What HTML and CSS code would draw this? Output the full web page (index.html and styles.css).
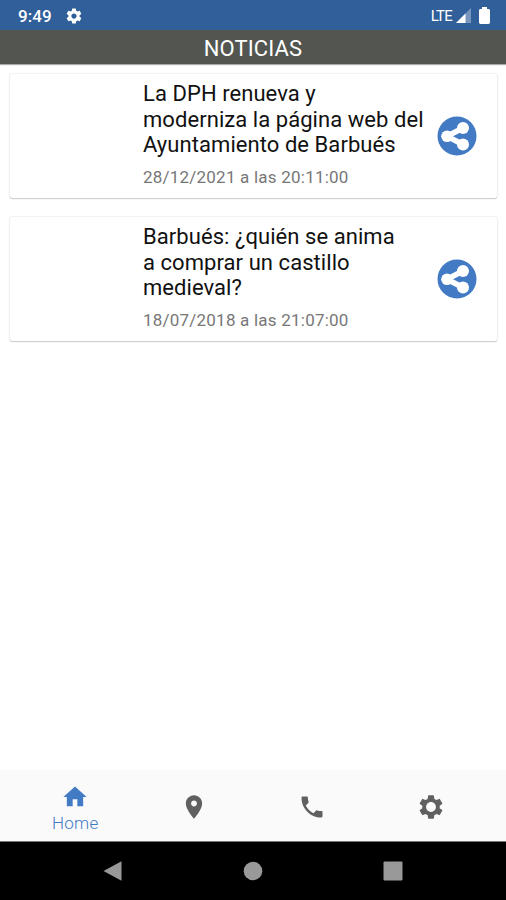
FILE: index.html
```html
<!DOCTYPE html>
<html lang="es">
<head>
<meta charset="UTF-8">
<meta name="viewport" content="width=device-width, initial-scale=1.0">
<title>Noticias</title>
<link rel="stylesheet" href="styles.css">
</head>
<body>

<div class="estado">
  <span class="hora">9:49</span>
  <svg class="ajustes" viewBox="0 0 24 24"><path d="M19.43 12.98c.04-.32.07-.64.07-.98s-.03-.66-.07-.98l2.11-1.65c.19-.15.24-.42.12-.64l-2-3.46c-.12-.22-.39-.3-.61-.22l-2.49 1c-.52-.4-1.08-.73-1.69-.98l-.38-2.65C14.46 2.18 14.25 2 14 2h-4c-.25 0-.46.18-.49.42l-.38 2.65c-.61.25-1.17.59-1.69.98l-2.49-1c-.23-.09-.49 0-.61.22l-2 3.46c-.13.22-.07.49.12.64l2.11 1.65c-.04.32-.07.65-.07.98s.03.66.07.98l-2.11 1.65c-.19.15-.24.42-.12.64l2 3.46c.12.22.39.3.61.22l2.49-1c.52.4 1.08.73 1.69.98l.38 2.65c.03.24.24.42.49.42h4c.25 0 .46-.18.49-.42l.38-2.65c.61-.25 1.17-.59 1.69-.98l2.49 1c.23.09.49 0 .61-.22l2-3.46c.12-.22.07-.49-.12-.64l-2.11-1.65zM12 15.5c-1.93 0-3.5-1.57-3.5-3.5s1.57-3.5 3.5-3.5 3.5 1.57 3.5 3.5-1.57 3.5-3.5 3.5z"/></svg>
  <span class="lte">LTE</span>
  <svg class="senal" viewBox="0 0 15 15"><path opacity=".35" d="M15 0v15H0z"/><path d="M9.5 5.5V15H0z"/></svg>
  <svg class="bateria" viewBox="0 0 11 17"><path d="M3 0h5v2h1.5c.8 0 1.5.6 1.5 1.4v12.2c0 .8-.7 1.4-1.5 1.4h-8C.7 17 0 16.400 0 15.600V3.400C0 2.600.7 2 1.500 2H3z"/></svg>
</div>

<header class="titulo">NOTICIAS</header>

<main class="noticias">
  <article class="noticia">
    <div class="texto">
      <h2>La DPH renueva y<br>moderniza la página web del<br>Ayuntamiento de Barbués</h2>
      <p>28/12/2021 a las 20:11:00</p>
    </div>
    <svg class="compartir" viewBox="0 0 40 40"><circle cx="20" cy="20" r="19.500" fill="#427ac4"/><path d="M26 12 10 20.300l16 8.200" fill="none" stroke="#fff" stroke-width="5.500"/><circle cx="26" cy="12" r="6" fill="#fff"/><circle cx="10" cy="20.300" r="5.800" fill="#fff"/><circle cx="26" cy="28.500" r="6" fill="#fff"/></svg>
  </article>
  <article class="noticia">
    <div class="texto">
      <h2>Barbués: ¿quién se anima<br>a comprar un castillo<br>medieval?</h2>
      <p>18/07/2018 a las 21:07:00</p>
    </div>
    <svg class="compartir" viewBox="0 0 40 40"><circle cx="20" cy="20" r="19.500" fill="#427ac4"/><path d="M26 12 10 20.300l16 8.200" fill="none" stroke="#fff" stroke-width="5.500"/><circle cx="26" cy="12" r="6" fill="#fff"/><circle cx="10" cy="20.300" r="5.800" fill="#fff"/><circle cx="26" cy="28.500" r="6" fill="#fff"/></svg>
  </article>
</main>

<nav class="menu">
  <a class="opcion activa">
    <svg viewBox="0 0 24 24"><path d="M10 20v-6h4v6h5v-8h3L12 3 2 12h3v8z"/></svg>
    <span>Home</span>
  </a>
  <a class="opcion">
    <svg viewBox="0 0 24 24"><path d="M12 2C8.130 2 5 5.130 5 9c0 5.250 7 13 7 13s7-7.750 7-13c0-3.870-3.130-7-7-7zm0 9.500c-1.380 0-2.500-1.120-2.500-2.500s1.120-2.500 2.500-2.500 2.500 1.120 2.500 2.500-1.120 2.500-2.500 2.500z"/></svg>
  </a>
  <a class="opcion">
    <svg viewBox="0 0 24 24"><path d="M20 15.500c-1.250 0-2.450-.2-3.570-.57-.1-.03-.21-.05-.31-.05-.26 0-.51.1-.71.290l-2.200 2.200c-2.830-1.440-5.150-3.750-6.590-6.580l2.200-2.210c.28-.27.36-.66.25-1.010C8.700 6.450 8.500 5.250 8.500 4c0-.55-.45-1-1-1H4c-.55 0-1 .45-1 1 0 9.390 7.610 17 17 17 .55 0 1-.45 1-1v-3.500c0-.55-.45-1-1-1z"/></svg>
  </a>
  <a class="opcion">
    <svg viewBox="0 0 24 24"><path d="M19.43 12.98c.04-.32.07-.64.07-.98s-.03-.66-.07-.98l2.11-1.65c.19-.15.24-.42.12-.64l-2-3.46c-.12-.22-.39-.3-.61-.22l-2.49 1c-.52-.4-1.08-.73-1.69-.98l-.38-2.65C14.46 2.18 14.25 2 14 2h-4c-.25 0-.46.18-.49.42l-.38 2.65c-.61.25-1.17.59-1.69.98l-2.49-1c-.23-.09-.49 0-.61.22l-2 3.46c-.13.22-.07.49.12.64l2.11 1.65c-.04.32-.07.65-.07.98s.03.66.07.98l-2.11 1.65c-.19.15-.24.42-.12.64l2 3.46c.12.22.39.3.61.22l2.49-1c.52.4 1.08.73 1.69.98l.38 2.65c.03.24.24.42.49.42h4c.25 0 .46-.18.49-.42l.38-2.65c.61-.25 1.17-.59 1.69-.98l2.49 1c.23.09.49 0 .61-.22l2-3.46c.12-.22.07-.49-.12-.64l-2.11-1.65zM12 16.200c-2.320 0-4.200-1.880-4.200-4.200s1.880-4.200 4.200-4.200 4.200 1.880 4.200 4.200-1.880 4.200-4.200 4.200z"/></svg>
  </a>
</nav>

<div class="sistema">
  <svg viewBox="0 0 22 22"><path d="M19.500 1.200v19.600L1.500 11z"/></svg>
  <svg viewBox="0 0 22 22"><circle cx="11" cy="11" r="9.300"/></svg>
  <svg viewBox="0 0 22 22"><rect x="1.500" y="1.500" width="19" height="19" rx="1"/></svg>
</div>

</body>
</html>
```
FILE: styles.css
```css
body {
  margin: 0;
  height: 100vh;
  display: flex;
  flex-direction: column;
  overflow: hidden;
  background: #fff;
  font-family: Roboto, "Liberation Sans", sans-serif;
}
.estado {
  box-sizing: border-box;
  height: 30px;
  padding: 1px 16px 0 18px;
  display: flex;
  align-items: center;
  background: #305f9a;
  color: #fff;
  fill: #fff;
}
.hora {
  font-size: 17px;
  font-weight: 500;
  letter-spacing: 0.1px;
}
.ajustes {
  width: 18px;
  height: 18px;
  margin-left: 13px;
}
.lte {
  margin-left: auto;
  font-size: 15px;
  letter-spacing: -0.8px;
}
.senal {
  width: 15px;
  height: 15px;
  margin-left: 4px;
}
.bateria {
  width: 11px;
  height: 17px;
  margin-left: 8px;
}
.titulo {
  height: 34px;
  line-height: 37px;
  background: #525550;
  color: #fff;
  text-align: center;
  font-size: 22px;
  letter-spacing: 0.1px;
  box-shadow: 0 1px 1px #aaa;
}
.noticias {
  flex: 1;
  display: flex;
  flex-direction: column;
  gap: 19px;
  padding: 10px 9px 0 10px;
}
.noticia {
  box-sizing: border-box;
  height: 124px;
  padding: 7px 20px 0 133px;
  display: flex;
  justify-content: space-between;
  border-radius: 2px;
  box-shadow: 0 0 2px #ccc, 0 1px 1px #ccc;
}
.noticia h2 {
  margin: 0;
  font-size: 22px;
  font-weight: 400;
  line-height: 25.7px;
  letter-spacing: 0.06px;
  white-space: nowrap;
  color: #111;
}
.noticia p {
  margin: 9px 0 0;
  font-size: 17px;
  line-height: 20px;
  letter-spacing: 0.22px;
  color: #777;
}
.compartir {
  width: 40px;
  height: 40px;
  margin-top: 35px;
}
.menu {
  height: 71px;
  padding: 0 16px;
  display: flex;
  background: #fafafa;
  border-bottom: 1px solid #777;
}
.opcion {
  flex: 1;
  display: flex;
  flex-direction: column;
  align-items: center;
  justify-content: center;
  fill: #606060;
}
.opcion svg {
  width: 28px;
  height: 28px;
  margin-top: 2px;
}
.activa {
  color: #427ac4;
  fill: #427ac4;
}
.activa svg {
  margin-top: 4px;
}
.activa span {
  font-size: 17px;
  font-weight: 300;
  line-height: 20px;
  letter-spacing: 0.3px;
  margin-top: 2px;
}
.sistema {
  height: 58px;
  display: flex;
  align-items: center;
  justify-content: center;
  gap: 118px;
  background: #000;
  fill: #999;
}
.sistema svg {
  width: 22px;
  height: 22px;
}
```
